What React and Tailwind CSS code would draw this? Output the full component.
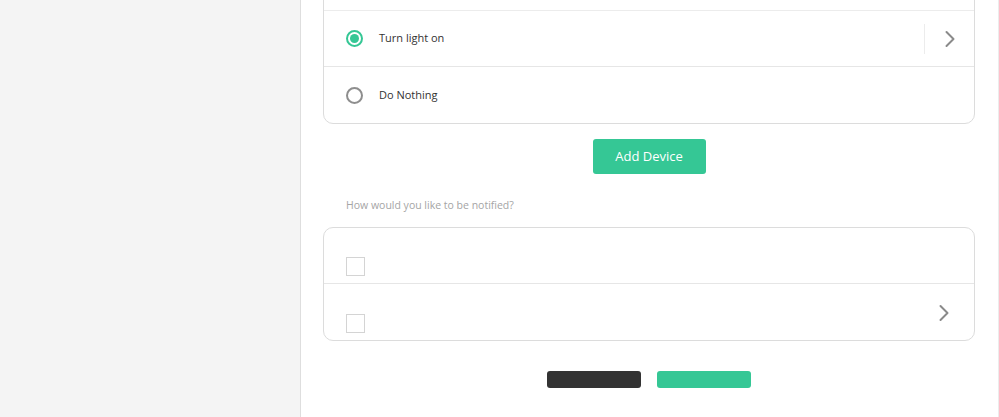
import React from "react";

const Chevron = ({ className = "" }) => (
  <svg width="12" height="18" viewBox="0 0 12 18" className={className} fill="none">
    <path d="M2.5 2 L9.5 9 L2.5 16" stroke="#8a8a8a" strokeWidth="2" strokeLinecap="round" strokeLinejoin="round" />
  </svg>
);

const Radio = ({ checked }) =>
  checked ? (
    <span className="flex h-[17px] w-[17px] items-center justify-center rounded-full border-2 border-[#35c795]">
      <span className="h-[9px] w-[9px] rounded-full bg-[#35c795]" />
    </span>
  ) : (
    <span className="h-[17px] w-[17px] rounded-full border-2 border-[#8e8e8e]" />
  );

const Checkbox = () => <span className="block h-[19px] w-[19px] border border-[#d4d4d4] bg-white" />;

export default function App() {
  return (
    <div className="flex h-[417px] w-[999px] overflow-hidden bg-white" style={{ fontFamily: '"Open Sans", sans-serif' }}>
      <aside className="h-full w-[301px] shrink-0 border-r border-[#dedede] bg-[#f4f4f4]" />
      <main className="flex h-full w-[698px] shrink-0 flex-col border-r border-[#ececec] pl-[22px] pr-[23px]">
        <div className="-mt-[46px] rounded-[10px] border border-[#dcdcdc]">
          <div className="h-[56px] border-b border-[#ececec]" />
          <div className="flex h-[56px] items-center border-b border-[#e6e6e6] pl-[22px]">
            <Radio checked />
            <span className="ml-[16px] text-[11px] text-[#333]">Turn light on</span>
            <div className="ml-auto flex h-full items-center">
              <span className="h-[30px] w-px bg-[#ececec]" />
              <span className="flex w-[49px] items-center justify-center">
                <Chevron />
              </span>
            </div>
          </div>
          <div className="flex h-[56px] items-center pl-[22px]">
            <Radio />
            <span className="ml-[16px] text-[11px] text-[#333]">Do Nothing</span>
          </div>
        </div>

        <div className="mt-[15px] flex justify-center">
          <button className="flex h-[35px] w-[113px] items-center justify-center rounded-[3px] bg-[#35c795] text-[13px] text-white">
            Add Device
          </button>
        </div>

        <p className="mt-[23px] pl-[23px] text-[10.5px] leading-[16px] text-[#a5a5a5]">How would you like to be notified?</p>

        <div className="mt-[14px] rounded-[10px] border border-[#dcdcdc]">
          <div className="flex h-[56px] items-end border-b border-[#e6e6e6] pb-[7px] pl-[22px]">
            <Checkbox />
          </div>
          <div className="flex h-[56px] items-end pb-[7px] pl-[22px]">
            <Checkbox />
            <span className="ml-auto mr-[24px] mb-[11px]">
              <Chevron />
            </span>
          </div>
        </div>

        <div className="mt-[30px] flex justify-center gap-[16px]">
          <button className="h-[17px] w-[94px] rounded-[3px] bg-[#333333]" />
          <button className="h-[17px] w-[94px] rounded-[3px] bg-[#35c795]" />
        </div>
      </main>
    </div>
  );
}
